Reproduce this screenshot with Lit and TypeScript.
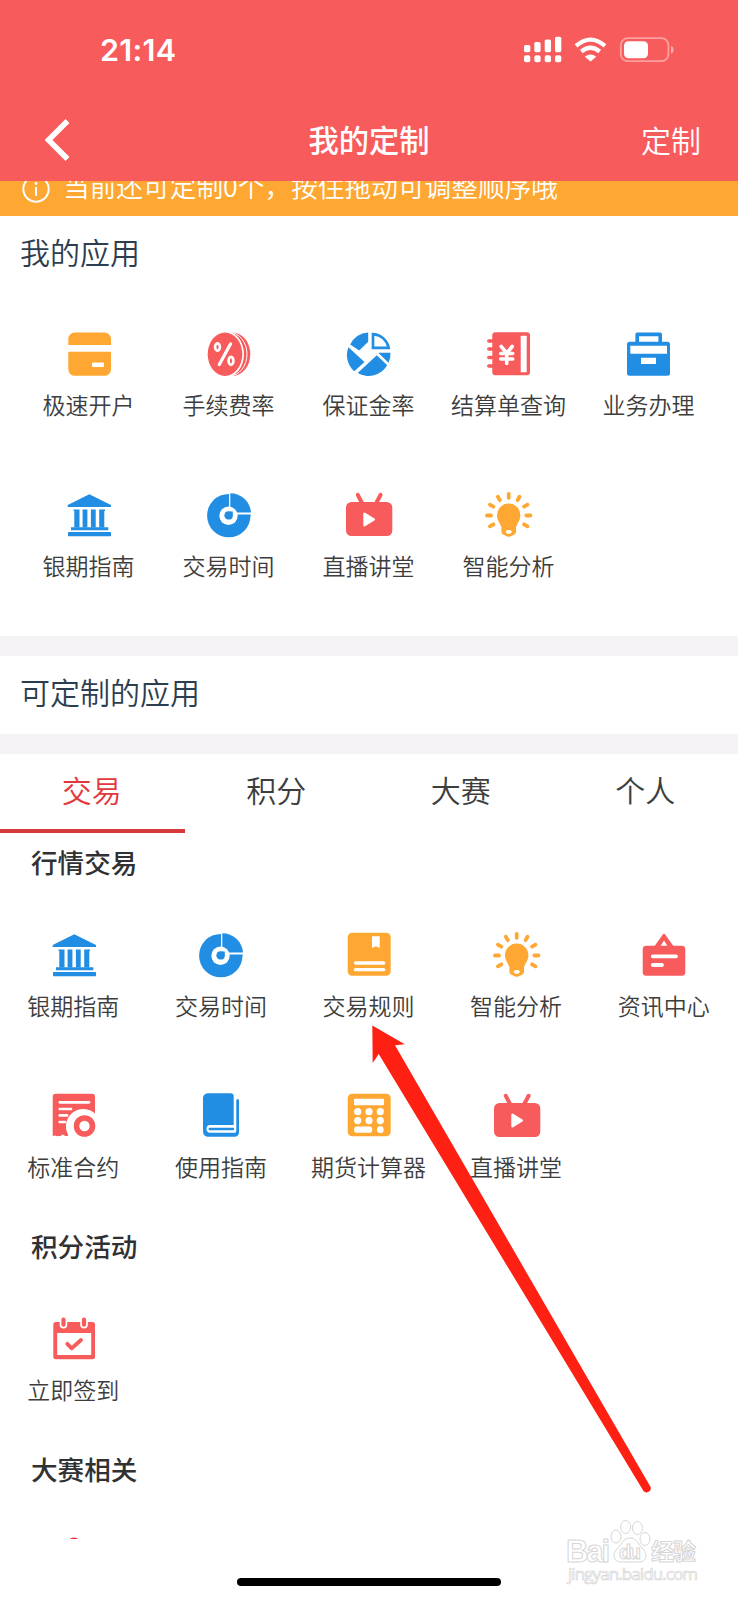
import { LitElement, html, css, svg } from "lit";
import { customElement, property } from "lit/decorators.js";

const RED = "#f85b5c";
const BLUE = "#218de3";
const ORANGE = "#fea732";

const rays = [-210, -180, -150, -120, -90, -60, -30, 0, 30];

const icons: Record<string, unknown> = {
  card: svg`<g fill=${ORANGE}>
    <path d="M3.3 15V9a6.5 6.5 0 0 1 6.5-6.5h29.700a6.500 6.500 0 0 1 6.500 6.500v6z"/>
    <path d="M3.300 21.700h42.700v17.600a6.500 6.500 0 0 1-6.500 6.500H9.800a6.500 6.500 0 0 1-6.500-6.500z"/></g>
    <rect x="27" y="32.400" width="12" height="4.600" rx="1" fill="#fff"/>`,
  coin: svg`<ellipse cx="27.500" cy="24.200" rx="17.800" ry="21.700" fill=${RED}/>
    <ellipse cx="24.400" cy="24.200" rx="17.600" ry="21.700" fill="none" stroke="#fff" stroke-width="1"/>
    <ellipse cx="20.700" cy="24.200" rx="18.300" ry="23" fill="#fff"/>
    <ellipse cx="20" cy="24.200" rx="17.300" ry="21.700" fill=${RED}/>
    <g fill="none" stroke="#fff" stroke-width="2.700" stroke-linecap="round"><ellipse cx="12.500" cy="17" rx="2.400" ry="3.600"/><ellipse cx="26" cy="30.800" rx="2.400" ry="4"/><path d="M25.500 14 14.300 34.500" stroke-width="3.200"/></g>`,
  pie: svg`<g fill=${BLUE}>
    <path d="M23.200 2.500V11.700L14.200 20.500 5.200 14.500A21.600 21.600 0 0 1 23.200 2.500z"/>
    <path d="M3.400 17.200 19.500 32 9.300 41.300A21.600 21.600 0 0 1 3.400 17.200z"/>
    <path d="M12.700 43 31.800 25.300 42.200 35.300A21.600 21.600 0 0 1 12.700 43z"/>
    <path d="M33.300 22.700H45.500A21.600 21.600 0 0 1 43.500 32.800z"/></g>
    <path d="M28 4.200V17.800H43.600C42.300 10.500 36.500 5.200 28 4.200z" fill="none" stroke=${BLUE} stroke-width="2.700"/>`,
  ledger: svg`<rect x="7.300" y="2.300" width="37.700" height="43" rx="3" fill=${RED}/>
    <path d="M3.800 11H9M3.800 19H9M3.800 27.500H9M3.800 36H9" stroke=${RED} stroke-width="3.500" stroke-linecap="round"/>
    <rect x="35.700" y="5.700" width="6" height="36.600" rx=".6" fill="#fff"/>
    <path d="M16.200 16.500 21.700 23.200 27.200 16.500M21.700 23V33.500M15.800 23.500H27.700M15.800 29H27.700" fill="none" stroke="#fff" stroke-width="3.600" stroke-linecap="round"/>`,
  briefcase: svg`<rect x="2" y="11.700" width="43" height="34" rx="2.500" fill=${BLUE}/>
    <path d="M12.200 13V4.400H35.200V13" fill="none" stroke=${BLUE} stroke-width="3.600" stroke-linejoin="round"/>
    <path d="M5.300 15.700H42V23.700H5.300zM16 27.700H31V34H16z" fill="#fff"/>`,
  bank: svg`<g fill=${BLUE}><path d="M24.300 3.300 46 14v2H2.700V14zM8.600 18.500H14.500V36.500H9.300V20H8.600zM17.600 18.500H22.400V36.500H17.600zM25.900 18.500H30.700V36.500H25.900zM34.200 18.500H40V20H39.300V36.500H34.200z"/>
    <path d="M6 36.300H43.300V39.200H6z"/><rect x="3" y="41" width="43" height="4.300" rx=".7"/></g>`,
  clock: svg`<circle cx="23.800" cy="24.600" r="21.700" fill=${BLUE}/>
    <path d="M24 24V0H48V24z" fill="#fff"/><path d="M25.300 21.500V2.300A20.700 20.700 0 0 1 46 21.500z" fill=${BLUE}/>
    <path d="M24 23.500H45.400L45.500 25H24z" fill=${BLUE}/>
    <circle cx="23.500" cy="24.700" r="9.200" fill="#fff"/>
    <path d="M23.500 20.200 27.800 20.500 27.800 24.700A4.200 4.200 0 1 1 23.500 20.200z" fill=${BLUE}/>`,
  tv: svg`<rect x="1" y="11" width="46.300" height="34" rx="5.500" fill=${RED}/>
    <path d="M12.800 3.800 17 12M35.600 3.800 31.300 12" stroke=${RED} stroke-width="4" stroke-linecap="round"/>
    <path d="M19.500 22.700V34.200L28.800 28.500z" fill="#fff" stroke="#fff" stroke-width="2.400" stroke-linejoin="round"/>`,
  bulb: svg`<g transform="translate(23.700 24.500)"><path d="M-11.700-.3A11.700 11.700 0 1 1 11.700-.3C11.700 4.500 9 7 7.300 11.500V16.200C7.300 18.500 5.200 19.300 3.500 20 1.500 21.700-1.500 21.700-3.500 20-5.200 19.300-7.300 18.500-7.300 16.200V11.500C-9 7-11.700 4.500-11.700-.3z" fill=${ORANGE}/>
    <path d="M-3.200 15.500Q0 13.700 3.200 15.500 2.700 18.500 0 18.300-2.700 18.500-3.200 15.500z" fill="#fff"/>
    ${rays.map((a) => svg`<path d="M17.700 0H21.700" transform="rotate(${a})" stroke=${ORANGE} stroke-width="3.800" stroke-linecap="round"/>`)}</g>`,
  rules: svg`<rect x="2.700" y="1.700" width="43" height="43" rx="4.500" fill=${ORANGE}/>
    <path d="M27 5.300H34.700V17L30.850 15.200 27 17z" fill="#fff"/>
    <path d="M10.500 32H38.700M10.500 38.700H38.700" stroke="#fff" stroke-width="3.300" stroke-linecap="round"/>`,
  news: svg`<rect x="2.700" y="14.700" width="42.600" height="30" rx="3.500" fill=${RED}/>
    <path d="M24 4 15.500 16H32.500z" fill=${RED} stroke=${RED} stroke-width="2.500" stroke-linejoin="round"/>
    <path d="M24 9.500 20.700 14.700H27.300z" fill="#fff"/>
    <path d="M12.800 25.300H36M12.800 34H22" stroke="#fff" stroke-width="3.800" stroke-linecap="round"/>`,
  contract: svg`<path d="M5.700 1.700H42A3 3 0 0 1 45 4.700V44H20.500Q19.500 41 17.500 44H15Q13 41 10.500 44L8.500 44Q6.500 44.500 5.500 43.500L2.700 44V4.700A3 3 0 0 1 5.700 1.700z" fill=${RED}/>
    <path d="M9.800 10.300H39M9.800 17H21M9.800 23.400H17M9.800 30H15" stroke="#fff" stroke-width="2.700" stroke-linecap="round"/>
    <path d="M20.500 46A14.500 14.500 0 0 1 46 22.500V46z" fill="#fff"/>
    <circle cx="34.500" cy="34" r="8" fill="#fff" stroke=${RED} stroke-width="5.600"/>`,
  guide: svg`<path d="M10.500 1.300H33.700A3 3 0 0 1 36.700 4.300V33H13Q9.500 33 9.500 36.700T13 40.700H38.300Q39.300 40.700 39.300 38V8.500Q39.300 7 40.650 7T42 8.500V40Q42 44.800 37.500 44.800H11.500Q6 44.800 6 39V6A4.700 4.700 0 0 1 10.500 1.300z" fill=${BLUE}/>
    <path d="M12.700 37H36" stroke=${BLUE} stroke-width="2.400" stroke-linecap="round"/>`,
  calc: svg`<rect x="2.700" y="1.700" width="43" height="42.600" rx="4.500" fill=${ORANGE}/>
    <g fill="#fff"><rect x="9" y="6.700" width="30" height="6.500" rx="1"/>
    ${[12.7, 24, 35.3].map((x) => [19.7, 28.6].map((y) => svg`<circle cx=${x} cy=${y} r="3.600"/>`))}
    <circle cx="35.300" cy="37.700" r="3.400"/><rect x="9" y="34.600" width="18.300" height="6.200" rx="3.100"/></g>`,
  calendar: svg`<rect x="3.300" y="7" width="41.700" height="37.300" rx="2.500" fill=${RED}/>
    <rect x="7.200" y="18" width="34" height="22" fill="#fff"/>
    <g stroke-linecap="round" fill="none"><path d="M13.500 2V9.700M34 2V9.700" stroke="#fff" stroke-width="7.600"/>
    <path d="M13.500 4.500V9.700M34 4.500V9.700" stroke=${RED} stroke-width="4.200"/>
    <path d="M17.300 28.800 21.700 33.300 31 25" stroke=${RED} stroke-width="3.800" stroke-linejoin="round"/></g>`,
  medal: svg`<circle cx="24" cy="14.500" r="7" fill="#e92c3c"/>`,
};

@customElement("app-tile")
export class AppTile extends LitElement {
  static styles = css`
    :host { display: flex; flex-direction: column; align-items: center; height: 161px; }
    .icon { width: 48px; height: 48px; overflow: visible; flex: none; }
    .label { margin-top: 10px; padding-right: 1px; font-size: 23px; line-height: 32px; white-space: nowrap; color: #3d3d3d; }
  `;
  @property() icon = "";
  @property() label = "";
  render() {
    return html`<svg class="icon" viewBox="0 0 48 48">${icons[this.icon]}</svg><div class="label">${this.label}</div>`;
  }
}

const mine = [
  ["card", "极速开户"], ["coin", "手续费率"], ["pie", "保证金率"], ["ledger", "结算单查询"], ["briefcase", "业务办理"],
  ["bank", "银期指南"], ["clock", "交易时间"], ["tv", "直播讲堂"], ["bulb", "智能分析"],
];
const trade = [
  ["bank", "银期指南"], ["clock", "交易时间"], ["rules", "交易规则"], ["bulb", "智能分析"], ["news", "资讯中心"],
  ["contract", "标准合约"], ["guide", "使用指南"], ["calc", "期货计算器"], ["tv", "直播讲堂"],
];
const tiles = (list: string[][]) => list.map(([i, l]) => html`<app-tile icon=${i} label=${l}></app-tile>`);

@customElement("app-root")
export class AppRoot extends LitElement {
  static styles = css`
    * { box-sizing: border-box; }
    :host { display: block; position: relative; width: 738px; height: 1600px; overflow: hidden; background: #fff;
      font-family: "Noto Sans CJK SC", sans-serif; font-weight: 350; }
    .header { height: 181px; background: #f85b5c; color: #fff; }
    .status { height: 100px; padding: 0 64px 0 100px; display: flex; justify-content: space-between; align-items: center; }
    .time { font: 600 30.500px/36px Inter, sans-serif; letter-spacing: 0.3px; }
    .signals { width: 152px; height: 28px; }
    .nav { height: 81px; display: grid; grid-template-columns: 1fr auto 1fr; align-items: center; padding: 0 37px 4px 44px; }
    .back { width: 26px; height: 44px; margin-top: 3px; }
    .title { font-size: 30.300px; font-weight: 500; line-height: 44px; margin: 0 3.500px 0 -3.500px; }
    .action { font-size: 30px; line-height: 44px; text-align: right; }
    .notice { height: 35px; background: #fea732; color: #fff; overflow: hidden; display: flex; align-items: center; padding: 0 0 20px 21px; }
    .info { width: 30px; height: 30px; flex: none; margin: 1px 12px 0 0; }
    .tip { font-size: 26.700px; line-height: 40px; margin-top: -5px; white-space: nowrap; }
    .section { height: 78px; padding-left: 20px; font-size: 30px; line-height: 71px; color: #2c3e50; }
    .first { height: 114px; }
    .mine { display: grid; grid-template-columns: repeat(5, 1fr); padding: 0 19px; height: 306px; }
    .band { height: 20px; background: #f5f3f5; }
    .tabs { display: grid; grid-template-columns: repeat(4, 1fr); height: 79px; }
    .tab { text-align: center; font-size: 30px; line-height: 71px; padding-right: 1px; color: #3d3d3d; }
    .on { color: #e4393c; border-bottom: 4px solid #d63a3d; }
    .group { height: 98px; padding-left: 31px; font-size: 26.600px; line-height: 57px; font-weight: 500; color: #303133; }
    .grid { display: grid; grid-template-columns: repeat(5, 1fr); }
    .second { margin-top: -36px; }
    .next { height: 9px; margin-top: -8px; overflow: hidden; }
    .overlay { position: absolute; left: 0; top: 0; width: 738px; height: 1600px; pointer-events: none; }
    .home { position: absolute; left: 237px; top: 1578px; width: 264px; height: 8px; border-radius: 5px; background: #000; }
    .brand { font: 700 31px "Liberation Sans", sans-serif; }
    .paw { font: 700 20px "Liberation Sans", sans-serif; }
    .cn { font: 700 23px "Noto Sans CJK SC", sans-serif; }
    .url { font: 400 17px "Open Sans", sans-serif; }
  `;

  render() {
    return html`
      <header class="header">
        <div class="status">
          <span class="time">21:14</span>
          <svg class="signals" viewBox="0 0 152 28">
            <g fill="#fff">
              ${[[0, 9], [10.3, 6], [20.7, 3.5], [31, 0.7]].map(([x, y]) => svg`<rect x=${x + 2} y=${y} width="6.300" height=${16.2 - y} rx="1.600"/><rect x=${x + 2} y="19.300" width="6.300" height="7" rx="2"/>`)}
              <path d="M62.800 20.800Q68.500 16.400 74.200 20.800L68.500 25.500z"/>
            </g>
            <g fill="none" stroke="#fff" stroke-width="4.200"><path d="M54 9.800Q68.500-2.600 83 9.800"/><path d="M59.300 15.500Q68.500 8 77.700 15.500"/></g>
            <rect x="98.800" y="2.200" width="47.600" height="23" rx="7" fill="none" stroke="#fff" stroke-opacity=".42" stroke-width="1.800"/>
            <rect x="102" y="5.200" width="24" height="17" rx="4.500" fill="#fff"/>
            <path d="M149 10Q151.500 10.500 151.500 13.700T149 17.500z" fill="#fff" opacity=".5"/>
          </svg>
        </div>
        <div class="nav">
          <svg class="back" viewBox="0 0 26 44"><path d="M23.500 3 4.500 22 23.500 41" fill="none" stroke="#fff" stroke-width="5.500"/></svg>
          <span class="title">我的定制</span>
          <span class="action">定制</span>
        </div>
      </header>
      <div class="notice">
        <svg class="info" viewBox="0 0 30 30"><circle cx="15" cy="15" r="12.700" fill="none" stroke="#fff" stroke-width="2"/><path d="M15 13V22" stroke="#fff" stroke-width="2"/><circle cx="15" cy="9.500" r="1.400" fill="#fff"/></svg>
        <span class="tip">当前还可定制0个，按住拖动可调整顺序哦</span>
      </div>
      <div class="section first">我的应用</div>
      <div class="mine">${tiles(mine)}</div>
      <div class="band"></div>
      <div class="section">可定制的应用</div>
      <div class="band"></div>
      <div class="tabs">
        <div class="tab on">交易</div><div class="tab">积分</div><div class="tab">大赛</div><div class="tab">个人</div>
      </div>
      <div class="group">行情交易</div>
      <div class="grid">${tiles(trade)}</div>
      <div class="group second">积分活动</div>
      <div class="grid">${tiles([["calendar", "立即签到"]])}</div>
      <div class="group second">大赛相关</div>
      <div class="grid next">${tiles([["medal", ""]])}</div>
      <div class="home"></div>
      <svg class="overlay" viewBox="0 0 738 1600">
        <path d="M372.300 1025.500 404.800 1044.300 395 1045.300 650.600 1487A4.200 4.200 0 0 1 643.500 1491L378.700 1054 372.700 1063z" fill="#fe2013"/>
        <g fill="#fff" stroke="#d6d6d6" stroke-width="1">
          <text class="brand" x="566" y="1562" textLength="44">Bai</text>
          <ellipse cx="616" cy="1536.500" rx="5" ry="6.500"/><ellipse cx="625.700" cy="1527" rx="5" ry="6.500"/><ellipse cx="637.500" cy="1528" rx="5" ry="6.500"/><ellipse cx="645" cy="1539" rx="5" ry="6.500"/>
          <path d="M630 1538C637 1538 638 1544 642 1548 648 1553 648 1562 638 1562H622C612 1562 612 1553 618 1548 622 1544 623 1538 630 1538z"/>
          <text class="paw" x="619" y="1559" textLength="22">du</text>
          <text class="cn" x="651" y="1560" textLength="45">经验</text>
          <text class="url" x="568" y="1580" textLength="130" stroke-width=".7">jingyan.baidu.com</text>
        </g>
      </svg>
    `;
  }
}
